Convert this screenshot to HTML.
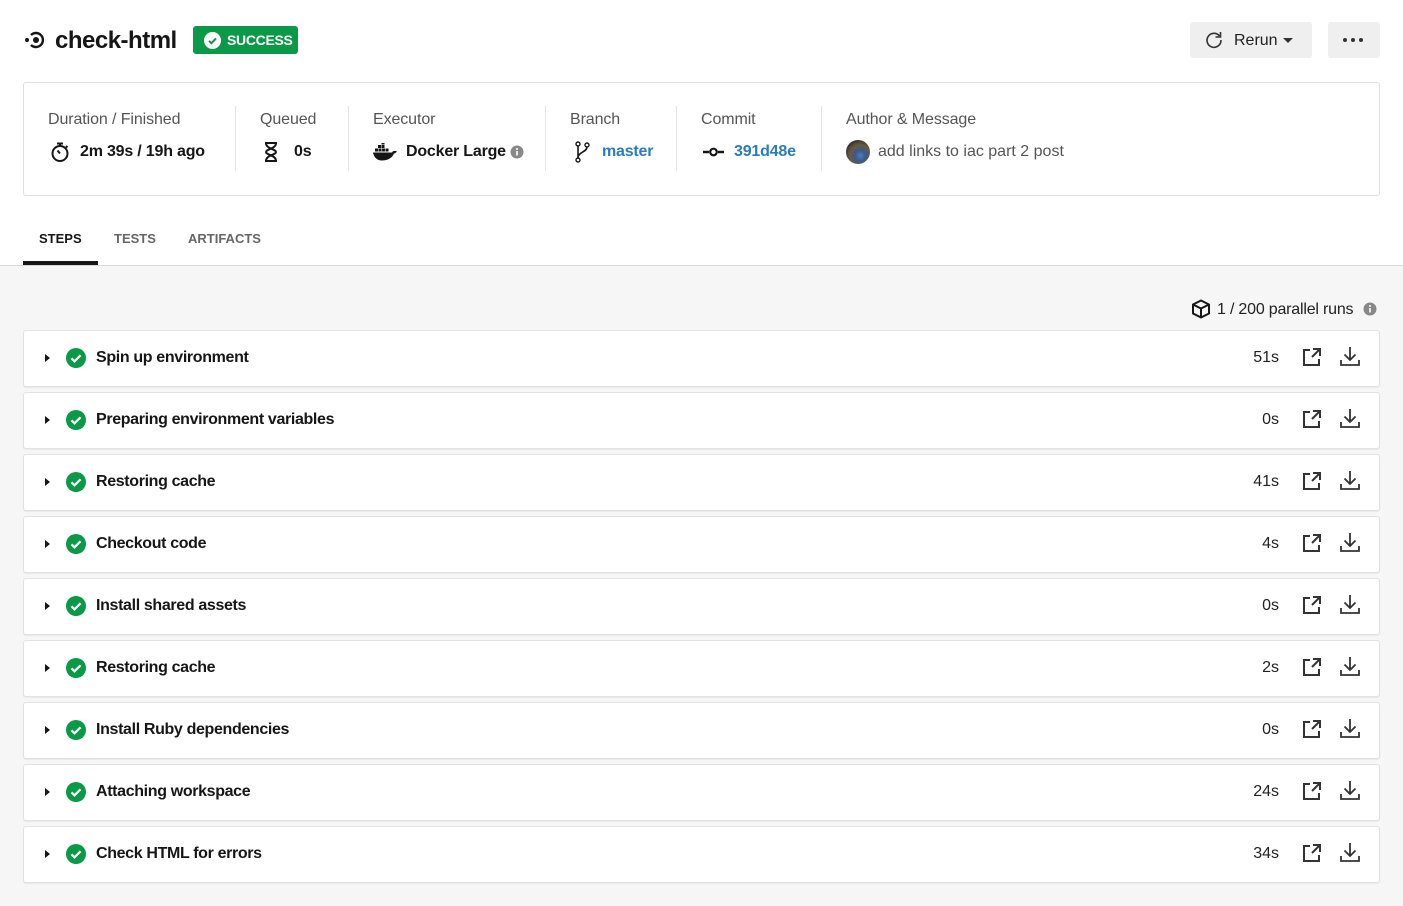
<!DOCTYPE html>
<html><head><meta charset="utf-8"><style>
*{box-sizing:border-box;margin:0;padding:0}
body{width:1403px;height:906px;overflow:hidden;background:#fff;font-family:"Liberation Sans",sans-serif;color:#161616;position:relative}
.abs{position:absolute}
.gray{background:#f6f6f6;position:absolute;left:0;top:265px;width:1403px;height:641px;border-top:1px solid #d9d9d9}
.card{position:absolute;left:23px;top:82px;width:1357px;height:114px;border:1px solid #e0e0e0;border-radius:3px}
.lab{position:absolute;top:111px;font-size:16px;color:#555;letter-spacing:-.1px}
.val{position:absolute;top:142px;font-size:16px;font-weight:bold;display:flex;align-items:center;gap:10px;height:20px;letter-spacing:-.2px}
.sep{position:absolute;top:106px;width:1px;height:65px;background:#e5e5e5}
.row{position:absolute;left:23px;width:1357px;height:57px;background:#fff;border-radius:3px;border:1px solid #e2e2e2;box-shadow:0 1px 1px rgba(0,0,0,.06)}
.row .tri{position:absolute;left:21px;top:23px;width:0;height:0;border-top:4px solid transparent;border-bottom:4px solid transparent;border-left:5px solid #161616}
.row .ck{position:absolute;left:42px;top:17px}
.row .nm{position:absolute;left:72px;top:18px;font-size:16px;font-weight:bold;letter-spacing:-.35px}
.row .t{position:absolute;right:100px;top:18px;font-size:16px;color:#222}
.row .i1{position:absolute;right:58px;top:17px}
.row .i2{position:absolute;right:19px;top:15px}
.btn{position:absolute;background:#efefef;border-radius:3px}
</style></head><body>
<svg class="abs" style="left:24px;top:30px" width="22" height="20" viewBox="0 0 22 20"><circle cx="3" cy="10" r="2" fill="#161616"/><path d="M7 5 A7 7 0 1 1 7 15" fill="none" stroke="#161616" stroke-width="2.4"/><circle cx="12" cy="10" r="3" fill="#161616"/></svg>
<div class="abs" style="left:55px;top:27px;font-size:24px;font-weight:bold;letter-spacing:-.5px">check-html</div>
<div class="abs" style="left:193px;top:26px;width:105px;height:28px;background:#0a9a47;border-radius:3px;color:#fff;font-size:14px;font-weight:bold;display:flex;align-items:center;padding-left:11px;gap:6px;letter-spacing:-.3px"><svg width="17" height="17" viewBox="0 0 17 17"><circle cx="8.5" cy="8.5" r="8.5" fill="#fff"/><path d="M5 8.8l2.4 2.4 4.6-4.8" fill="none" stroke="#0a9a47" stroke-width="2"/></svg>SUCCESS</div>
<div class="btn" style="left:1190px;top:22px;width:122px;height:36px"></div>
<svg class="abs" style="left:1205px;top:31px" width="18" height="18" viewBox="0 0 18 18"><path d="M14.5 5A7 7 0 1 0 16 9" fill="none" stroke="#333" stroke-width="1.6"/><path d="M15.5 1v5h-5" fill="none" stroke="#333" stroke-width="1.6"/></svg>
<div class="abs" style="left:1234px;top:32px;font-size:16px;color:#222">Rerun</div>
<div class="abs" style="left:1283px;top:38px;border-left:5px solid transparent;border-right:5px solid transparent;border-top:5px solid #333"></div>
<div class="btn" style="left:1328px;top:22px;width:52px;height:36px"></div>
<div class="abs" style="left:1343px;top:38px;display:flex;gap:4px"><i style="width:4px;height:4px;border-radius:50%;background:#333"></i><i style="width:4px;height:4px;border-radius:50%;background:#333"></i><i style="width:4px;height:4px;border-radius:50%;background:#333"></i></div>

<div class="card"></div>
<div class="lab" style="left:48px">Duration / Finished</div>
<div class="val" style="left:50px"><svg width="20" height="20" viewBox="0 0 20 20"><circle cx="10" cy="11.5" r="7.5" fill="none" stroke="#161616" stroke-width="2"/><path d="M7 1.5h6M10 2v2M10 11.5l-2.5-3M16 4l1.5 1.5" stroke="#161616" stroke-width="2" fill="none"/></svg>2m 39s / 19h ago</div>
<div class="sep" style="left:235px"></div>
<div class="lab" style="left:260px">Queued</div>
<div class="val" style="left:264px;gap:16px"><svg width="14" height="20" viewBox="0 0 14 20"><path d="M1 1h12M1 19h12M2 1c0 6 10 6 10 9s-10 3-10 9M12 1c0 6-10 6-10 9s10 3 10 9" fill="none" stroke="#161616" stroke-width="2"/></svg>0s</div>
<div class="sep" style="left:348px"></div>
<div class="lab" style="left:373px">Executor</div>
<div class="val" style="left:373px;gap:8px"><svg width="25" height="18" viewBox="0 0 25 18"><rect x="5" y="2" width="3" height="3" fill="#161616"/><rect x="8.5" y="2" width="3" height="3" fill="#161616"/><rect x="8.5" y="-1.5" width="3" height="3" fill="#161616"/><rect x="2" y="5.5" width="3" height="3" fill="#161616"/><rect x="5.5" y="5.5" width="3" height="3" fill="#161616"/><rect x="9" y="5.5" width="3" height="3" fill="#161616"/><rect x="12.5" y="5.5" width="3" height="3" fill="#161616"/><path d="M0 9.5h19c1-2 3-2 5-1-1 1-2 2-3 2-2 5-7 7-12 7-5 0-8-3-9-8z" fill="#161616"/></svg>Docker Large<svg width="14" height="14" viewBox="0 0 14 14" style="margin-left:-4px"><circle cx="7" cy="7" r="6.5" fill="#888"/><rect x="6.2" y="6" width="1.6" height="4.5" fill="#fff"/><circle cx="7" cy="4" r="1" fill="#fff"/></svg></div>
<div class="sep" style="left:545px"></div>
<div class="lab" style="left:570px">Branch</div>
<div class="val" style="left:575px;gap:11px;color:#2a7bc1"><svg width="16" height="22" viewBox="0 0 16 22"><circle cx="3" cy="3" r="2" fill="none" stroke="#161616" stroke-width="1.4"/><circle cx="12" cy="4" r="2" fill="none" stroke="#161616" stroke-width="1.4"/><circle cx="3" cy="19" r="2" fill="none" stroke="#161616" stroke-width="1.4"/><path d="M3 5v12M12 6c0 5-9 5-9 11" fill="none" stroke="#161616" stroke-width="1.6"/></svg>master</div>
<div class="sep" style="left:676px"></div>
<div class="lab" style="left:701px">Commit</div>
<div class="val" style="left:703px;gap:10px;color:#2a7bc1"><svg width="21" height="10" viewBox="0 0 21 10"><path d="M0 5h6M15 5h6" stroke="#161616" stroke-width="2.5"/><circle cx="10.5" cy="5" r="3.3" fill="none" stroke="#161616" stroke-width="2.2"/></svg>391d48e</div>
<div class="sep" style="left:821px"></div>
<div class="lab" style="left:846px">Author &amp; Message</div>
<div class="val" style="left:846px;font-weight:normal;color:#555;gap:8px;letter-spacing:0"><span style="width:24px;height:24px;border-radius:50%;background:radial-gradient(circle at 60% 65%,#4a7fc0 0,#3a5a8a 25%,#6a5a40 50%,#2a2a30 80%);display:inline-block"></span>add links to iac part 2 post</div>

<div class="gray"></div>
<div class="abs" style="left:39px;top:231px;font-size:13px;font-weight:bold;color:#161616">STEPS</div>
<div class="abs" style="left:114px;top:231px;font-size:13px;font-weight:bold;color:#666">TESTS</div>
<div class="abs" style="left:188px;top:231px;font-size:13px;font-weight:bold;color:#666">ARTIFACTS</div>
<div class="abs" style="left:23px;top:261px;width:75px;height:4px;background:#161616"></div>

<svg class="abs" style="left:1191px;top:299px" width="20" height="20" viewBox="0 0 20 20"><path d="M10 1.5l8 4v9l-8 4-8-4v-9z M2 5.5l8 4 8-4 M10 9.5v9" fill="none" stroke="#161616" stroke-width="2" stroke-linejoin="round"/></svg>
<div class="abs" style="left:1217px;top:301px;font-size:16px;color:#222;letter-spacing:-.2px">1 / 200 parallel runs</div>
<svg class="abs" style="left:1363px;top:302px" width="14" height="14" viewBox="0 0 14 14"><circle cx="7" cy="7" r="6.5" fill="#888"/><rect x="6.2" y="6" width="1.6" height="4.5" fill="#fff"/><circle cx="7" cy="4" r="1" fill="#fff"/></svg>

<div id="rows"></div>
<script>
var d=[["Spin up environment","51s"],["Preparing environment variables","0s"],["Restoring cache","41s"],["Checkout code","4s"],["Install shared assets","0s"],["Restoring cache","2s"],["Install Ruby dependencies","0s"],["Attaching workspace","24s"],["Check HTML for errors","34s"]];
var h="";d.forEach(function(r,i){h+='<div class="row" style="top:'+(330+62*i)+'px"><div class="tri"></div><svg class="ck" width="20" height="20" viewBox="0 0 20 20"><circle cx="10" cy="10" r="10" fill="#0a9a47"/><path d="M5.5 10.3l3 3 6-6" fill="none" stroke="#fff" stroke-width="2.2"/></svg><div class="nm">'+r[0]+'</div><div class="t">'+r[1]+'</div><svg class="i1" width="18" height="18" viewBox="0 0 18 18"><path d="M7 2H1v15h15v-6" fill="none" stroke="#333" stroke-width="2"/><path d="M10 1h7v7M17 1l-8 8" fill="none" stroke="#333" stroke-width="2"/></svg><svg class="i2" width="20" height="20" viewBox="0 0 20 20"><path d="M10 1v13M4.5 8.5l5.5 5.5 5.5-5.5M1 14v5h18v-5" fill="none" stroke="#333" stroke-width="1.8"/></svg></div>'});
document.getElementById("rows").innerHTML=h;
</script>
</body></html>
